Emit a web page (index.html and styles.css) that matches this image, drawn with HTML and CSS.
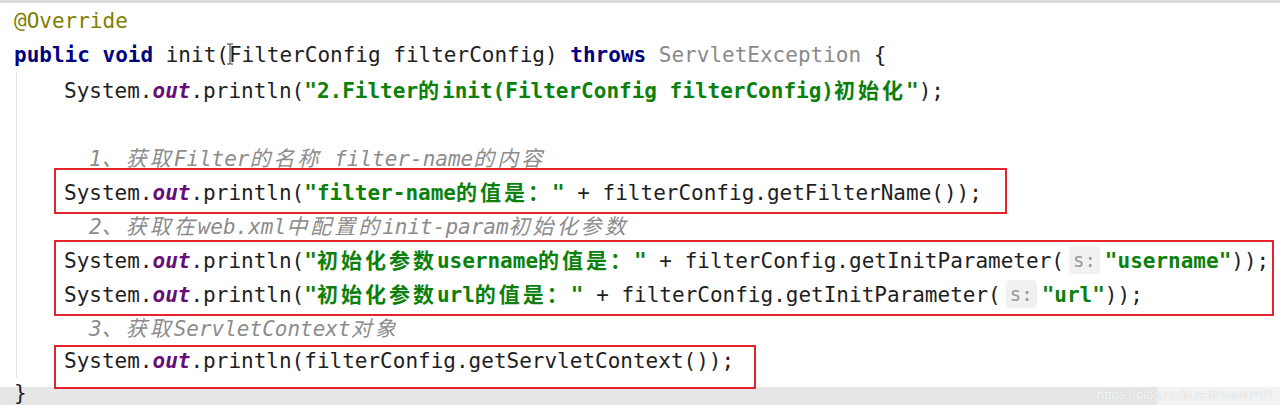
FILE: index.html
```html
<!DOCTYPE html>
<html lang="zh-CN">
<head>
    <meta charset="UTF-8">
    <title>FilterConfig init</title>
    <link rel="stylesheet" href="styles.css">
</head>
<body>
    <div class="editor">
        <div class="line"><span class="ann">@Override</span></div>
        <div class="line caret-line"><span class="kw">public void</span> init(FilterConfig filterConfig) <span class="kw">throws</span> <span class="unused">ServletException</span> {<svg class="caret" width="8" height="22" viewBox="0 0 8 22"><path d="M1 1h2.5q0.5 0 0.5 1v18q0 1 -0.5 1H1M7 1H4.5q-0.5 0 -0.5 1M7 21H4.5q-0.5 0 -0.5 -1" fill="none" stroke="#333" stroke-width="1"/></svg></div>

        <div class="body">
            <div class="line">System.<span class="fld">out</span>.println(<span class="str">"2.Filter<span class="cj">的</span>init(FilterConfig filterConfig)<span class="cj">初始化</span>"</span>);</div>
            <div class="line"></div>

            <!-- 1 -->
            <div class="line cmt">1<span class="cj">、获取</span>Filter<span class="cj">的名称</span> filter-name<span class="cj">的内容</span></div>
            <div class="mark mark-one">
                <div class="line">System.<span class="fld">out</span>.println(<span class="str">"filter-name<span class="cj">的值是：</span>"</span> + filterConfig.getFilterName());</div>
            </div>

            <!-- 2 -->
            <div class="line cmt">2<span class="cj">、获取在</span>web.xml<span class="cj">中配置的</span>init-param<span class="cj">初始化参数</span></div>
            <div class="mark mark-two">
                <div class="line">System.<span class="fld">out</span>.println(<span class="str">"<span class="cj">初始化参数</span>username<span class="cj">的值是：</span>"</span> + filterConfig.getInitParameter(<span class="hint">s:</span><span class="str">"username"</span>));</div>
                <div class="line">System.<span class="fld">out</span>.println(<span class="str">"<span class="cj">初始化参数</span>url<span class="cj">的值是：</span>"</span> + filterConfig.getInitParameter(<span class="hint">s:</span><span class="str">"url"</span>));</div>
            </div>

            <!-- 3 -->
            <div class="line cmt">3<span class="cj">、获取</span>ServletContext<span class="cj">对象</span></div>
            <div class="mark mark-three">
                <div class="line">System.<span class="fld">out</span>.println(filterConfig.getServletContext());</div>
            </div>
        </div>

        <div class="line last">}<span class="watermark">https://blog.csdn.net/cmm0401</span></div>
    </div>
</body>
</html>
```

FILE: styles.css
```css
* {
    margin: 0;
    padding: 0;
    box-sizing: border-box;
}

body {
    background-color: #fff;
    overflow: hidden;
}

.editor {
    position: relative;
    width: 1280px;
    height: 405px;
    border-top: 3px solid #dadada;
    padding-top: 1px;
    font-family: "DejaVu Sans Mono", "Liberation Mono", "Noto Sans CJK SC", monospace;
    font-size: 21px;
    color: #1e1e1e;
    overflow: hidden;
}

.line {
    height: 34px;
    line-height: 34px;
    padding-left: 14px;
    white-space: pre;
}

.body {
    margin-left: 16px;
    border-left: 1px solid #e4e4e4;
    padding-left: 47px;
}

.body .line {
    padding-left: 0;
}

.body .line.cmt {
    padding-left: 25px;
}

.cj {
    font-family: "Noto Sans CJK SC", sans-serif;
    font-size: 21px;
    letter-spacing: 3px;
}

.kw {
    color: #000080;
    font-weight: bold;
}

.ann {
    color: #808000;
}

.unused {
    color: #8a8a8a;
}

.fld {
    color: #660e7a;
    font-weight: bold;
    font-style: italic;
}

.str {
    color: #0b800b;
    font-weight: bold;
}

.cmt {
    color: #8c8c8c;
    font-style: italic;
}

.hint {
    display: inline-block;
    height: 28px;
    line-height: 28px;
    margin: 0 5px 0 5px;
    padding: 0 4px;
    background-color: #f1f1f1;
    border-radius: 4px;
    color: #9a9a9a;
    font-size: 19px;
    font-weight: normal;
    vertical-align: 1px;
}

/* caret */
.caret-line {
    position: relative;
}

.caret {
    position: absolute;
    left: 226px;
    top: 5px;
}

/* red annotation boxes */
.mark {
    position: relative;
}

.mark::after {
    content: '';
    position: absolute;
    z-index: 2;
    left: -10px;
    border: 2px solid #e5232b;
}

.mark-one::after {
    top: -6px;
    width: 949px;
    height: 42px;
}

.mark-two::after {
    top: -2px;
    width: 1216px;
    height: 72px;
}

.mark-three::after {
    top: 1px;
    width: 698px;
    height: 40px;
}

.last {
    position: relative;
    padding-left: 14px;
    height: 27px;
    line-height: 30px;
    background-image: linear-gradient(to right, #e6e6e6 1157px, #f3f3f3 1157px);
    background-position: 0 9px;
    background-repeat: no-repeat;
}

.watermark {
    position: absolute;
    right: 6px;
    bottom: 0;
    line-height: 20px;
    font-family: "Liberation Sans", sans-serif;
    font-size: 13px;
    color: #fafafa;
    text-shadow: 0 0 1px #b8b8b8;
}
```
